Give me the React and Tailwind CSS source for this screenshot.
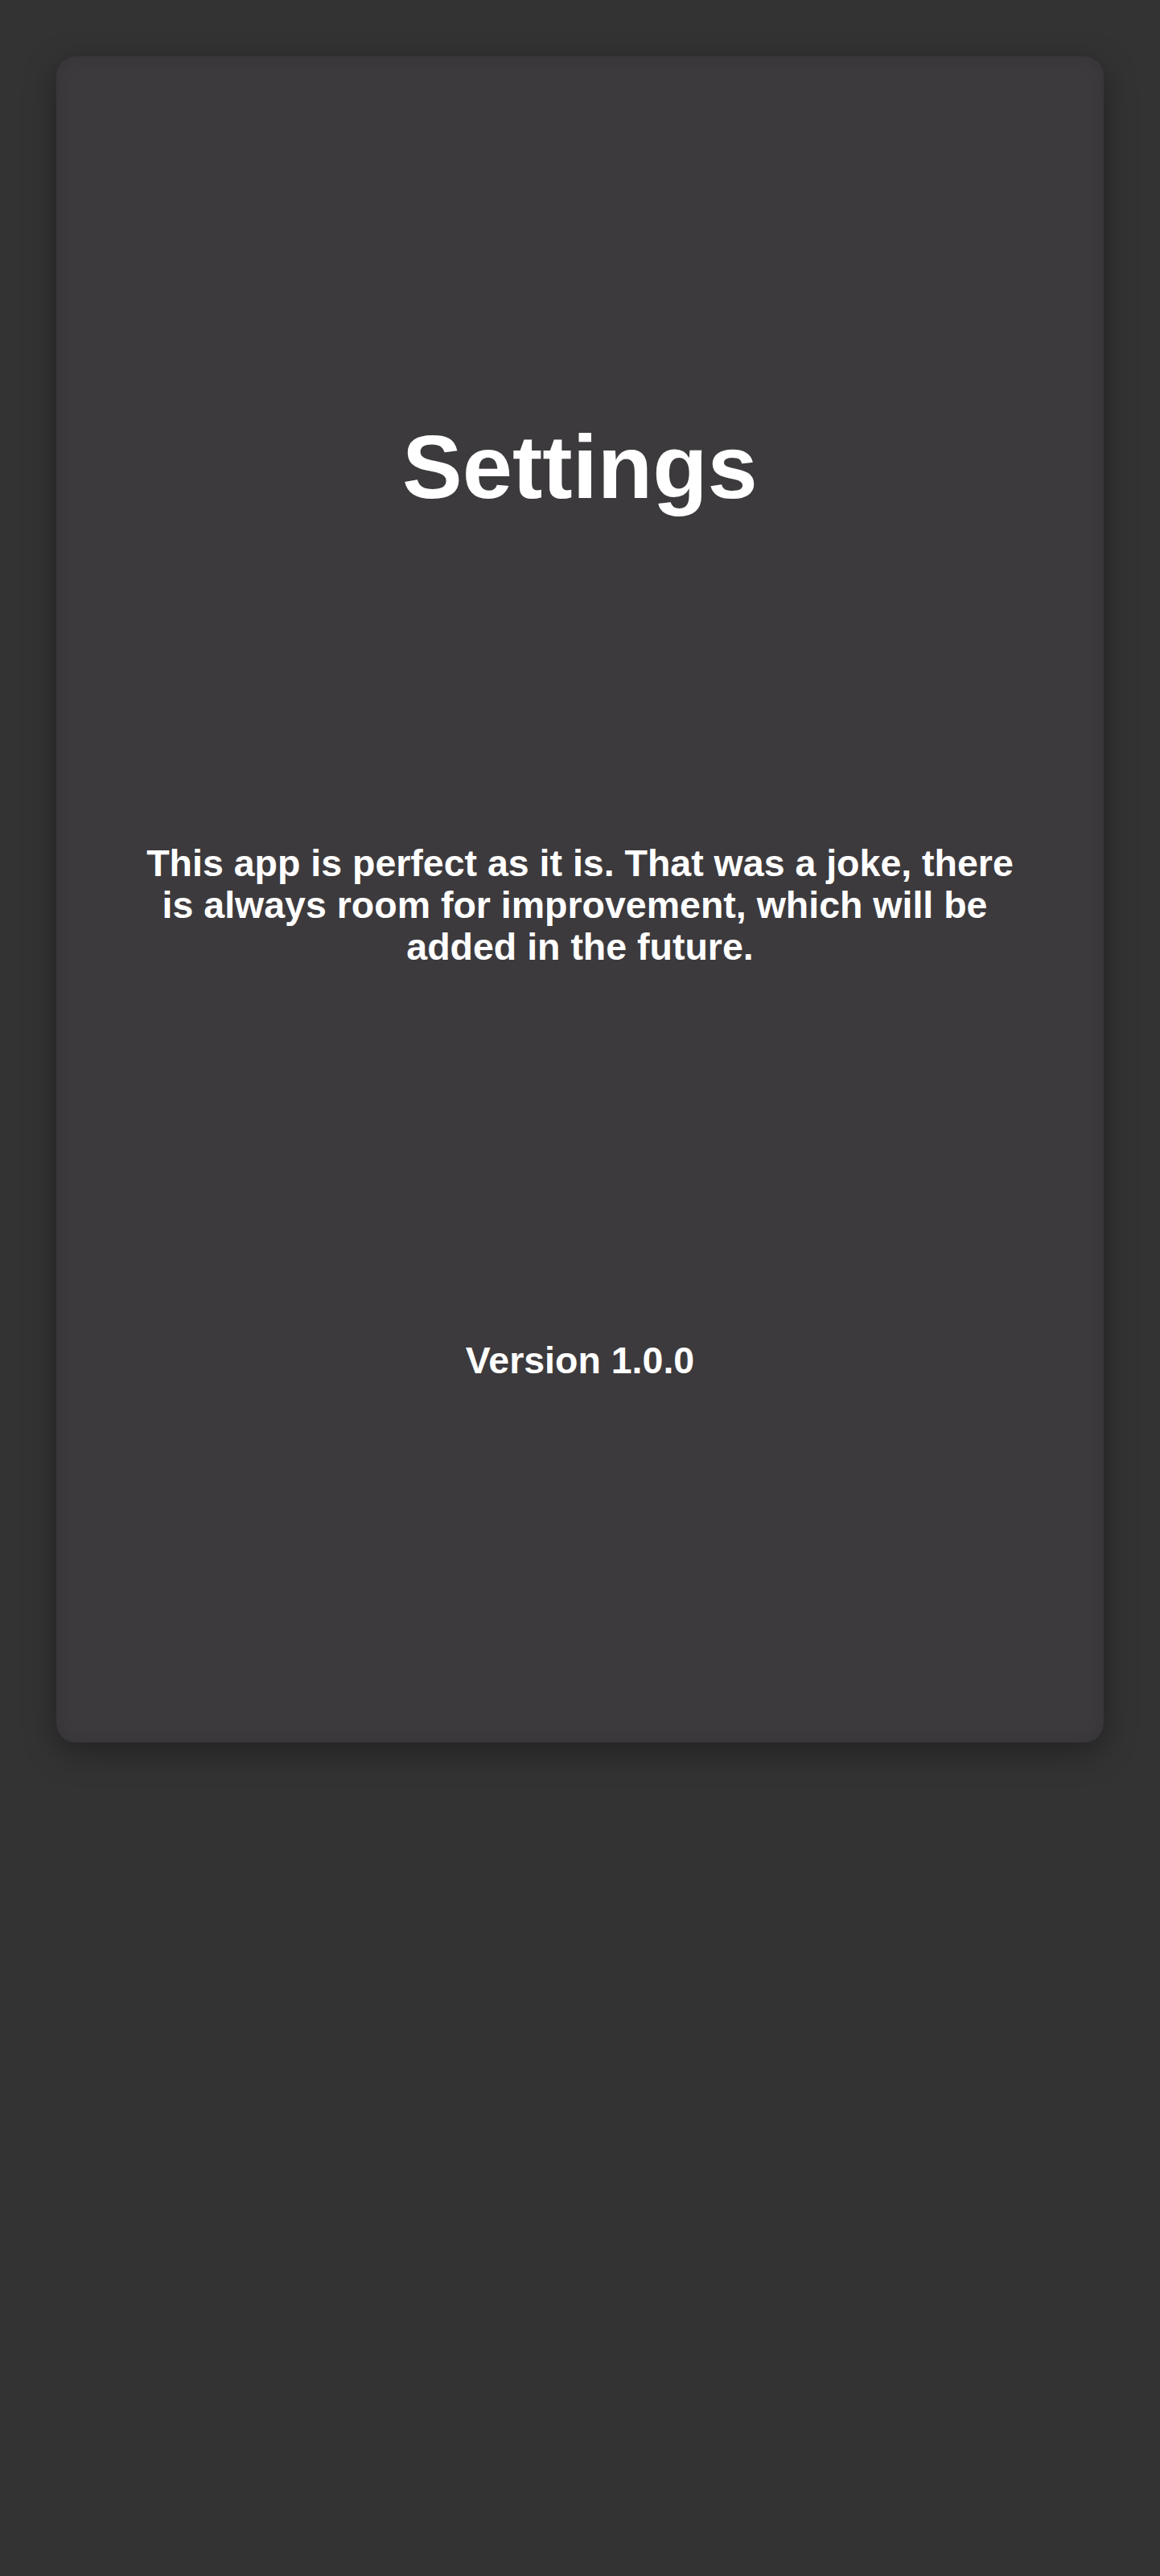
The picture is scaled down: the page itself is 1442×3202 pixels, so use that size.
import React from 'react';

export default function App() {
  return (
    <div className="min-h-[3202px] w-full bg-[#333333] pt-[70px] px-[70px] font-['Liberation_Sans',Arial,sans-serif] text-white">
      <div className="flex flex-col items-center rounded-3xl bg-[#3c3a3d] text-center shadow-[0_12px_40px_rgba(0,0,0,0.35),inset_0_0_18px_rgba(0,0,0,0.12)] h-[2096px] pt-[447px]">
        <h1 className="text-[112px] font-bold leading-[128px]">Settings</h1>
        <p className="mt-[402px] max-w-[1110px] text-[46.5px] font-bold leading-[52px]">
          This app is perfect as it is. That was a joke, there is always room for improvement, which will be{'\u00a0'} added in the future.
        </p>
        <p className="mt-[462px] text-[46.5px] font-bold leading-[52px]">Version 1.0.0</p>
      </div>
    </div>
  );
}
